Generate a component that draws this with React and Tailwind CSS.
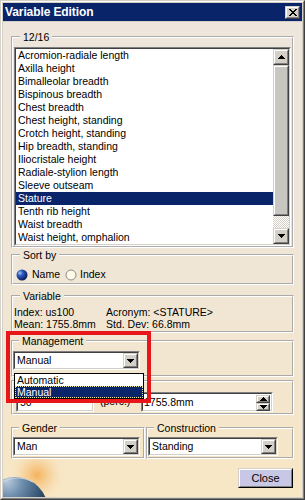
import React from "react";

const Tri = ({ up = false }) => (
  <svg width="7" height="4" viewBox="0 0 7 4" className="block" shapeRendering="crispEdges">
    {up ? (
      <path d="M3 0h1v1H3z M2 1h3v1H2z M1 2h5v1H1z M0 3h7v1H0z" fill="#000" />
    ) : (
      <path d="M0 0h7v1H0z M1 1h5v1H1z M2 2h3v1H2z M3 3h1v1H3z" fill="#000" />
    )}
  </svg>
);

const Raised = ({ className = "", face = "bg-[#d4d0c8]", children }) => (
  <div className={`border border-t-[#d4d0c8] border-l-[#d4d0c8] border-b-[#404040] border-r-[#404040] ${className}`}>
    <div className={`w-full h-full border border-t-white border-l-white border-b-[#808080] border-r-[#808080] ${face} flex items-center justify-center`}>
      {children}
    </div>
  </div>
);

const Sunken = ({ className = "", inner = "bg-white", children }) => (
  <div className={`border border-t-[#808080] border-l-[#808080] border-b-white border-r-white ${className}`}>
    <div className={`w-full h-full border border-t-[#404040] border-l-[#404040] border-b-[#d4d0c8] border-r-[#d4d0c8] ${inner} flex`}>
      {children}
    </div>
  </div>
);

const Combo = ({ value, className = "" }) => (
  <Sunken className={`h-[19px] ${className}`}>
    <div className="flex-1 pl-[2px] leading-[15px] overflow-hidden whitespace-nowrap">{value}</div>
    <Raised className="w-[15px] h-full">
      <Tri />
    </Raised>
  </Sunken>
);

const Group = ({ label, className = "", children }) => (
  <fieldset className={`border-2 [border-style:groove] border-white min-w-0 ${className}`}>
    {label ? <legend className="ml-[6px] px-[3px] leading-[12px] whitespace-nowrap">{label}</legend> : null}
    {children}
  </fieldset>
);

const items = [
  "Acromion-radiale length",
  "Axilla height",
  "Bimalleolar breadth",
  "Bispinous breadth",
  "Chest breadth",
  "Chest height, standing",
  "Crotch height, standing",
  "Hip breadth, standing",
  "Iliocristale height",
  "Radiale-stylion length",
  "Sleeve outseam",
  "Stature",
  "Tenth rib height",
  "Waist breadth",
  "Waist height, omphalion",
];

export default function App() {
  return (
    <div className="w-[305px] h-[500px] relative overflow-hidden bg-[#d4d0c8] border border-t-[#d4d0c8] border-l-[#d4d0c8] border-b-[#404040] border-r-[#404040] font-['Liberation_Sans',Arial,sans-serif] text-[10.5px] text-black">
      <div className="w-full h-full border border-t-white border-l-white border-b-[#808080] border-r-[#808080] p-[1px] flex flex-col">
        {/* Title bar */}
        <div className="h-[18px] bg-[#0a246a] flex items-center pl-[2px] pr-[2px] shrink-0">
          <div className="flex-1 text-white font-bold text-[12px] leading-[18px] tracking-[-0.1px]">Variable Edition</div>
          <Raised className="w-[15px] h-[13px]">
            <svg width="8" height="7" viewBox="0 0 8 7" shapeRendering="crispEdges">
              <path
                d="M0 0h2v1H0z M6 0h2v1H6z M1 1h2v1H1z M5 1h2v1H5z M2 2h4v1H2z M3 3h2v1H3z M2 4h4v1H2z M1 5h2v1H1z M5 5h2v1H5z M0 6h2v1H0z M6 6h2v1H6z"
                fill="#000"
              />
            </svg>
          </Raised>
        </div>

        {/* Body */}
        <div className="flex-1 relative mt-[1px] px-[8px] pt-[9px] flex flex-col bg-[linear-gradient(180deg,#eee6dc_0%,#efe6d8_45%,#f3e6cf_75%,#f8e7c4_100%)]">
          <svg className="absolute left-0 bottom-0" width="80" height="50" viewBox="0 0 80 50">
            <defs>
              <radialGradient id="glow" cx="34" cy="28" r="28" gradientUnits="userSpaceOnUse">
                <stop offset="0" stopColor="#f4a848" stopOpacity="0.85" />
                <stop offset="0.5" stopColor="#f6c27a" stopOpacity="0.45" />
                <stop offset="1" stopColor="#f8e4c0" stopOpacity="0" />
              </radialGradient>
              <radialGradient id="ball" cx="4" cy="34" r="44" gradientUnits="userSpaceOnUse">
                <stop offset="0" stopColor="#b8cadb" />
                <stop offset="0.35" stopColor="#6f8fae" />
                <stop offset="0.75" stopColor="#3a5878" />
                <stop offset="1" stopColor="#1f3550" />
              </radialGradient>
            </defs>
            <rect x="0" y="0" width="80" height="50" fill="url(#glow)" />
            <circle cx="12" cy="63" r="33" fill="url(#ball)" />
            <path d="M-18 60 A33 33 0 0 1 30 35" fill="none" stroke="#d8e4ee" strokeWidth="1.2" opacity="0.7" />
          </svg>

          <div className="relative flex flex-col">
            {/* 12/16 */}
            <Group label="12/16" className="px-[1px] pb-0">
              <Sunken className="mt-[4px] h-[199px]">
                <div className="flex-1 flex flex-col">
                  {items.map((t) =>
                    t === "Stature" ? (
                      <div key={t} className="h-[13px] leading-[13px] pl-[2px] bg-[#0a246a] text-white whitespace-nowrap">
                        {t}
                      </div>
                    ) : (
                      <div key={t} className="h-[13px] leading-[13px] pl-[2px] whitespace-nowrap">
                        {t}
                      </div>
                    )
                  )}
                </div>
                <div className="w-[16px] flex flex-col">
                  <Raised className="h-[16px] shrink-0">
                    <Tri up />
                  </Raised>
                  <Raised className="h-[151px] shrink-0" face="bg-[#c8c6c0]" />
                  <div className="flex-1 bg-[repeating-conic-gradient(#d4d0c8_0%_25%,#ffffff_0%_50%)] bg-[length:2px_2px]" />
                  <Raised className="h-[16px] shrink-0">
                    <Tri />
                  </Raised>
                </div>
              </Sunken>
            </Group>

            {/* Sort by */}
            <Group label="Sort by" className="mt-[1px] px-[1px] pb-[2px]">
              <div className="mt-[7px] h-[13px] flex items-center">
                <svg width="12" height="12" viewBox="0 0 12 12" className="ml-[2px]">
                  <defs>
                    <radialGradient id="rb" cx="4" cy="4" r="8" gradientUnits="userSpaceOnUse">
                      <stop offset="0" stopColor="#a8c4f0" />
                      <stop offset="0.35" stopColor="#2d5cc0" />
                      <stop offset="1" stopColor="#0a1a58" />
                    </radialGradient>
                  </defs>
                  <circle cx="6" cy="6" r="5.5" fill="url(#rb)" />
                </svg>
                <span className="ml-[4px]">Name</span>
                <svg width="12" height="12" viewBox="0 0 12 12" className="ml-[5px]">
                  <circle cx="6" cy="6" r="5" fill="#fffbe8" stroke="#8c8c8c" strokeWidth="1" />
                </svg>
                <span className="ml-[3px]">Index</span>
              </div>
            </Group>

            {/* Variable */}
            <Group label="Variable" className="mt-[5px] px-[1px] pb-[1px]">
              <div className="mt-[4px] grid grid-cols-[92px_1fr] leading-[12px] whitespace-nowrap">
                <div className="h-[12px]">Index: us100</div>
                <div className="h-[12px]">Acronym: &lt;STATURE&gt;</div>
                <div className="h-[12px]">Mean: 1755.8mm</div>
                <div className="h-[12px]">Std. Dev: 66.8mm</div>
              </div>
            </Group>

            {/* Management */}
            <Group label="Management" className="mt-[2px] px-0 pb-[5px]">
              <Combo value="Manual" className="mt-[4px] w-[127px]" />
            </Group>

            {/* Value (label hidden under the open list) */}
            <Group className="mt-[3px] px-[3px] pb-[1px]">
              <div className="mt-[10px] flex items-center">
                <Sunken className="w-[78px] h-[20px]">
                  <div className="pl-[2px] leading-[16px]">50</div>
                </Sunken>
                <span className="ml-[6px] w-[41px]">(perc.)</span>
                <Sunken className="w-[132px] h-[20px]">
                  <div className="flex-1 pl-[1px] leading-[16px]">1755.8mm</div>
                  <div className="w-[15px] flex flex-col py-[1px] pr-[1px]">
                    <Raised className="flex-1">
                      <Tri up />
                    </Raised>
                    <Raised className="flex-1">
                      <Tri />
                    </Raised>
                  </div>
                </Sunken>
              </div>
            </Group>

            {/* Gender / Construction */}
            <div className="mt-[7px] flex">
              <Group label="Gender" className="w-[134px] px-0 pb-[1px]">
                <Combo value="Man" className="mt-[3px] w-[127px]" />
              </Group>
              <Group label="Construction" className="flex-1 ml-[1px] px-0 pb-[1px]">
                <Combo value="Standing" className="mt-[3px] w-[130px]" />
              </Group>
            </div>

            {/* Close */}
            <div className="mt-[9px] flex justify-end pr-[1px]">
              <Raised className="w-[55px] h-[20px] border-b-black border-r-black" face="bg-[#c8c8e6]">
                <span className="text-[11px]">Close</span>
              </Raised>
            </div>
          </div>
        </div>
      </div>

      {/* Dropdown list (open) */}
      <div className="absolute left-[13px] top-[372px] w-[130px] h-[26px] bg-white border border-black">
        <div className="h-[12px] leading-[12px] pl-[2px]">Automatic</div>
        <div className="h-[12px] leading-[11px] pl-[1px] bg-[#0a246a] text-white border border-dotted border-[#e8e8a0]">Manual</div>
      </div>

      {/* Red highlight */}
      <div className="absolute left-[5px] top-[330px] w-[145px] h-[72px] border-4 border-[#e8161b]" />
    </div>
  );
}
